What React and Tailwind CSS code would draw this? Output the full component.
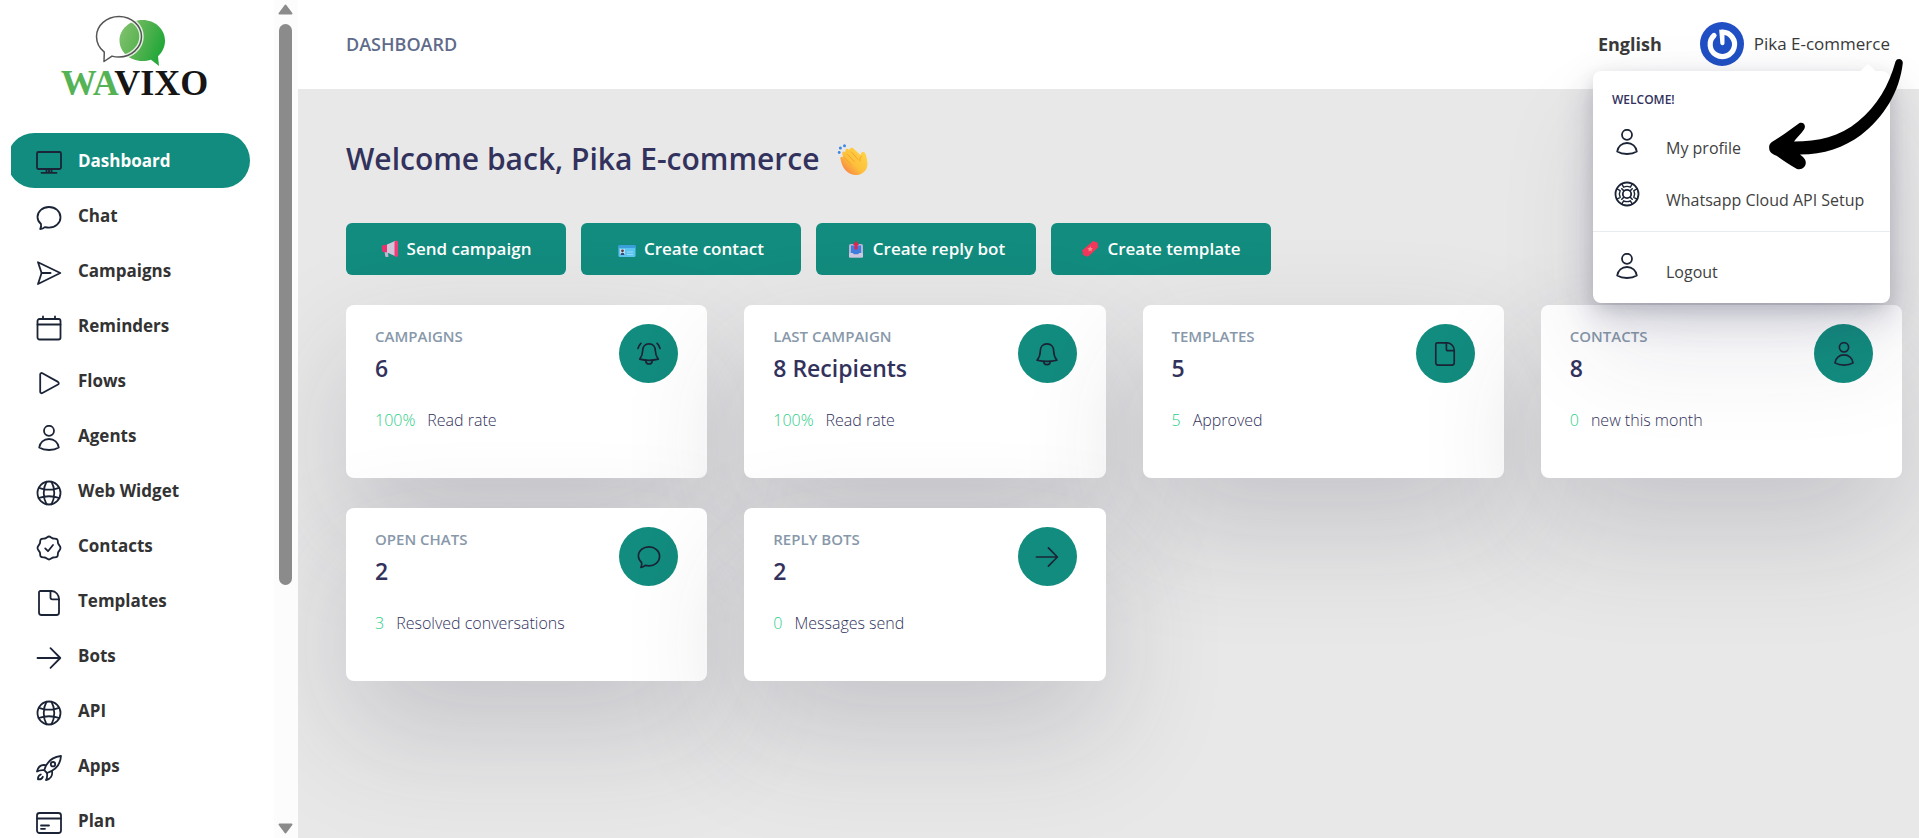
import React from 'react';

const Icon = ({ children, className = 'h-[26px] w-[26px]' }) => (
    <svg viewBox="0 0 26 26" fill="none" stroke="#1b2436" strokeWidth="1.8" strokeLinecap="round" strokeLinejoin="round" className={`shrink-0 ${className}`} aria-hidden="true">
        {children}
    </svg>
);

const shapes = {
    monitor: (
        <>
            <rect x="1" y="2" width="24" height="17" rx="1.5" />
            <path d="M5.500 22.800h15M10.500 19.500v3M15.500 19.500v3M13 19.500v3" />
        </>
    ),
    chat: <path d="M4.200 24.200c.9-1.800 1.200-3.400.8-5.200C2.900 17.200 1.500 14.800 1.500 12 1.500 6.300 6.700 2 13 2s11.500 4.300 11.500 10.200S19.300 22.600 13 22.600c-1.600 0-2.800-.2-4.200-.5-1.200 1.200-2.700 1.900-4.600 2.100z" />,
    send: (
        <>
            <path d="M2 2.200 24.300 13 2 24l3.600-11z" />
            <path d="M5.600 13h9" />
        </>
    ),
    calendar: (
        <>
            <rect x="1.500" y="4" width="23" height="20.500" rx="2" />
            <path d="M1.500 9.500h23M7 1.500V4M19 1.500V4" />
        </>
    ),
    play: <path d="M4.200 4.500v17.200c0 1.200 1.200 1.900 2.200 1.300l15.600-8.500c1-.6 1-2 0-2.600L6.400 3.200c-1-.5-2.200.2-2.200 1.300z" />,
    user: (
        <>
            <circle cx="13" cy="5.800" r="5" />
            <path d="M3.200 22.600C3.800 17.500 7.800 14 13 14s9.200 3.500 9.800 8.600C20 24.300 16.500 25 13 25s-7-.7-9.800-2.400z" />
        </>
    ),
    globe: (
        <>
            <circle cx="13" cy="13" r="11.500" />
            <path d="M10.500 1.800C6.800 8.500 6.800 17.500 10.500 24.200M15.500 1.800c3.700 6.700 3.700 15.700 0 22.400M3 7.800c6 2.300 14 2.300 20 0M2.600 18c6-2 14.800-2 20.800 0" />
        </>
    ),
    verified: (
        <>
            <path d="M13 1.500c1.500 0 2.500 1.700 4.100 2 1.500.3 3.100-.3 4.100.8s.4 2.700.9 4.100c.5 1.500 2.400 2.700 2.400 4.600s-1.900 3.100-2.400 4.600c-.5 1.400.1 3-.9 4.100s-2.600.5-4.100.8c-1.600.3-2.600 2-4.100 2s-2.500-1.700-4.100-2c-1.500-.3-3.100.3-4.100-.8s-.4-2.700-.9-4.100C3.400 16.100 1.500 14.900 1.500 13s1.900-3.100 2.400-4.600c.5-1.400-.1-3 .9-4.100s2.600-.5 4.100-.8c1.600-.3 2.600-2 4.100-2z" />
            <path d="m9.200 13.400 2.800 2.800 5-6.200" />
        </>
    ),
    file: (
        <>
            <path d="M4.500 1h11.200c4 0 7.300 4 7.300 8v13.500c0 1.300-.9 2.500-2.500 2.500h-15C3.900 25 3 23.800 3 22.500v-20C3 1.600 3.600 1 4.500 1z" />
            <path d="M14.500 1v6.500c0 1.200.8 1.900 1.900 1.900H23" />
        </>
    ),
    arrow: <path d="M1.500 13H24M14.500 3.200 24.300 13l-9.800 9.800" />,
    rocket: (
        <>
            <path d="M8.200 15.200C10.500 7.500 16.500 1.800 25 1c-.6 8.600-6.300 14.500-14 17z" />
            <circle cx="17" cy="9.200" r="2.200" />
            <path d="M9.800 10.200c-4-.8-7.600 1.200-8.800 6.300 2.200-1.200 4.800-1.600 7.200-1.300M16 16.300c.8 4-1.200 7.600-6 8.700 1.200-2.200 1.400-4.600 1-7M4.800 19.500c-2 .8-3 2.600-2.800 4.900 2.200.2 4-.7 4.800-2.600" />
        </>
    ),
    card: (
        <>
            <rect x="1" y="3" width="24" height="20" rx="2.500" />
            <path d="M5 15.500h8M5 18.800h4" />
            <path d="M1.500 8.500h23" strokeWidth="2.200" />
        </>
    ),
    bell: (
        <>
            <path d="M13 2C8.200 2 5.800 5.600 5.800 9.500c0 4-.8 6.800-3.600 10.300 6.800 1.600 14.800 1.600 21.600 0-2.800-3.500-3.600-6.300-3.600-10.300C20.200 5.600 17.800 2 13 2z" />
            <path d="M9.500 21.200c0 4.400 7 4.400 7 0" />
        </>
    ),
    bellRing: (
        <>
            <path d="M13 2C8.600 2 6.200 5.400 6.200 9c0 4-.8 6.300-3.300 9.600 6.300 1.600 13.900 1.600 20.200 0-2.500-3.300-3.300-5.600-3.300-9.600C19.800 5.400 17.400 2 13 2z" />
            <path d="M9.500 20.200c0 4.800 7 4.800 7 0M4.200 1.500C2.700 3 1.700 4.800 1 7M21.800 1.500C23.300 3 24.300 4.800 25 7" />
        </>
    ),
    support: (
        <>
            <circle cx="13" cy="13" r="11.500" />
            <circle cx="13" cy="13" r="4.200" />
            <path d="M7.800 2.900 9.600 6.200c2-1 4.800-1 6.800 0l1.800-3.300M7.800 23.100l1.800-3.300c2 1 4.800 1 6.800 0l1.800 3.300M2.900 7.800l3.300 1.800c-1 2-1 4.800 0 6.800l-3.300 1.800M23.100 7.800l-3.300 1.800c1 2 1 4.800 0 6.800l3.300 1.800" strokeWidth="1.400" />
            <path d="m9.800 9.800-2-2M16.200 9.800l2-2M9.800 16.200l-2 2M16.200 16.200l2 2" strokeWidth="1.600" />
        </>
    ),
};

const navItems = [
    { label: 'Dashboard', icon: 'monitor', active: true },
    { label: 'Chat', icon: 'chat' },
    { label: 'Campaigns', icon: 'send' },
    { label: 'Reminders', icon: 'calendar' },
    { label: 'Flows', icon: 'play' },
    { label: 'Agents', icon: 'user' },
    { label: 'Web Widget', icon: 'globe' },
    { label: 'Contacts', icon: 'verified' },
    { label: 'Templates', icon: 'file' },
    { label: 'Bots', icon: 'arrow' },
    { label: 'API', icon: 'globe' },
    { label: 'Apps', icon: 'rocket' },
    { label: 'Plan', icon: 'card' },
];

const MegaphoneEmoji = () => (
    <svg viewBox="0 0 18 18" className="h-[18px] w-[18px]" aria-hidden="true">
        <path d="M3.500 11h3l1 5.500c0 .6-3 .6-3.200 0z" fill="#c3b7cf" />
        <path d="M1 5.500 6 4.500v8L1 11.500z" fill="#e8336d" />
        <path d="M6 4.500 14 1v15l-8-3.500z" fill="#cfc6da" />
        <rect x="13.500" y=".5" width="3.500" height="16.500" rx="1.700" fill="#ef3e78" />
    </svg>
);

const CardEmoji = () => (
    <svg viewBox="0 0 18 18" className="h-[18px] w-[18px]" aria-hidden="true">
        <rect x=".5" y="5" width="17" height="12" rx="1.500" fill="#5cc5f2" />
        <rect x=".5" y="5" width="17" height="3" rx="1" fill="#3a9fdb" />
        <rect x="2" y="9" width="5" height="6" fill="#b9dcf0" />
        <circle cx="4.500" cy="10.800" r="1.400" fill="#5b3b3b" />
        <path d="M2.500 15c0-3 4-3 4 0z" fill="#2f4b7c" />
        <path d="M9 12h6M9 14.500h6" stroke="#93dafa" strokeWidth="1" />
    </svg>
);

const OutboxEmoji = () => (
    <svg viewBox="0 0 18 18" className="h-[18px] w-[18px]" aria-hidden="true">
        <rect x="2" y="4" width="14" height="13.500" rx="1.500" fill="#b9b3d6" />
        <path d="M4 5.500h10V14H4z" fill="#3f7fe0" />
        <path d="M2 13h4l1 2h4l1-2h4v3.500c0 .6-.4 1-1 1H3c-.6 0-1-.4-1-1z" fill="#cfc9e4" />
        <path d="M9 .8 12 5h-1.500v4.500h-3V5H6z" fill="#e5234f" />
    </svg>
);

const TicketEmoji = () => (
    <svg viewBox="0 0 18 18" className="h-[18px] w-[18px]" aria-hidden="true">
        <path d="M12.500.8 14 2l1.600-.2L17.200 4l-.6 1.600.9 1.500L6.800 17l-1.400-1.200-1.700.3L1.500 14l.5-1.700-1.200-1.500z" fill="#f0385d" />
        <path d="m9.200 6.300.8 1.700 1.900.3-1.400 1.300.3 1.900-1.600-.9-1.700.9.3-1.900-1.400-1.300 2-.3z" fill="#ff8a80" />
    </svg>
);

const ClapEmoji = () => (
    <svg viewBox="0 0 31 31" className="h-[31px] w-[31px]" aria-hidden="true">
        <defs>
            <linearGradient id="hand" x1="1" y1="0" x2="0" y2="1">
                <stop offset="0" stopColor="#ffd84a" />
                <stop offset=".55" stopColor="#fdc03a" />
                <stop offset="1" stopColor="#f4694a" />
            </linearGradient>
        </defs>
        <path d="M3.500 15c-.8-2 1.300-3 2.500-1.800L5.300 9.500c-.3-2 1.700-2.600 2.800-1.200l.4-2c.3-1.900 2.300-1.900 3.300-.5l1.700-1.500c1.200-1 2.700-.3 3.400.8l6.600 5.900.6-1.800c.6-1.700 3.300-1.600 4.200.2 1.500 3.500 2.700 9.500 1.900 13-1.400 5.700-6.500 8.800-12.200 8.500C10.500 30.500 5 24 3.500 15z" fill="url(#hand)" />
        <path d="m8 14 6 6.500M10.500 10.500l7 7M14.500 8l6.500 7.500M24.500 12c-1.500 1.500-2 3-1.600 5" stroke="#f3a02c" strokeWidth=".9" strokeLinecap="round" fill="none" />
        <g fill="#3b86e8">
            <circle cx="2.200" cy="8.500" r="1.400" />
            <circle cx="3.400" cy="4" r="1.500" />
            <circle cx="7.500" cy="1.800" r="1.500" />
        </g>
    </svg>
);

const actions = [
    { label: 'Send campaign', emoji: <MegaphoneEmoji /> },
    { label: 'Create contact', emoji: <CardEmoji /> },
    { label: 'Create reply bot', emoji: <OutboxEmoji /> },
    { label: 'Create template', emoji: <TicketEmoji /> },
];

const stats = [
    { title: 'CAMPAIGNS', value: '6', count: '100%', note: 'Read rate', icon: 'bellRing' },
    { title: 'LAST CAMPAIGN', value: '8 Recipients', count: '100%', note: 'Read rate', icon: 'bell' },
    { title: 'TEMPLATES', value: '5', count: '5', note: 'Approved', icon: 'file' },
    { title: 'CONTACTS', value: '8', count: '0', note: 'new this month', icon: 'user' },
    { title: 'OPEN CHATS', value: '2', count: '3', note: 'Resolved conversations', icon: 'chat' },
    { title: 'REPLY BOTS', value: '2', count: '0', note: 'Messages send', icon: 'arrow' },
];

const Logo = () => (
    <a href="#home" className="flex h-[133px] flex-col items-center pt-[15px] pr-4">
        <svg viewBox="0 0 72 52" className="mr-2 h-[52px] w-[72px]" aria-hidden="true">
            <defs>
                <linearGradient id="leaf" x1="0" y1="0" x2="1" y2=".4">
                    <stop offset="0" stopColor="#84c473" />
                    <stop offset=".45" stopColor="#62b657" />
                    <stop offset="1" stopColor="#25a83a" />
                </linearGradient>
            </defs>
            <path d="M47.500 5C60 5 70 14 70 25.500c0 7-3 12-7 15.800L64 51l-8-6.200c-2.700.9-5.500 1.200-8.500 1.200-13 0-23-9.500-23-20.500S34.500 5 47.500 5z" fill="url(#leaf)" />
            <path d="M24 1.500c12.500 0 22.500 9 22.500 20S36.500 42 24 42c-2.600 0-5-.3-7-.9L9 46.500l.3-9.300C4.800 33.500 1.500 28 1.500 21.500c0-11 10-20 22.500-20z" fill="none" stroke="#fff" strokeWidth="4.500" strokeLinejoin="round" opacity=".8" />
            <path d="M24 1.500c12.500 0 22.500 9 22.500 20S36.500 42 24 42c-2.600 0-5-.3-7-.9L9 46.500l.3-9.300C4.800 33.500 1.500 28 1.500 21.500c0-11 10-20 22.500-20z" fill="none" stroke="#555" strokeWidth="1.500" strokeLinejoin="round" />
        </svg>
        <span className="font-['Liberation_Serif',serif] text-[36px] leading-8 font-bold text-[#151515]">
            <span className="text-[#55b356]">WA</span>VIXO
        </span>
    </a>
);

const Sidebar = () => (
    <aside className="sticky top-0 flex h-screen w-[298px] shrink-0 bg-white">
        <div className="ml-[11px] flex-1 overflow-hidden">
            <Logo />
            <nav>
                <ul>
                    {navItems.map((item) => (
                        <li key={item.label}>
                            <a
                                href="#nav"
                                className={`-ml-1 mr-6 flex h-[55px] items-center gap-4 rounded-full pl-[29px] text-[17px] font-bold ${item.active ? 'bg-[#128c7e] text-white' : 'text-[#333]'}`}
                            >
                                <Icon className="mt-1 h-[26px] w-[26px]">{shapes[item.icon]}</Icon>
                                {item.label}
                            </a>
                        </li>
                    ))}
                </ul>
            </nav>
        </div>

        {/* Scroll track */}
        <div className="flex w-6 flex-col items-center gap-[9px] bg-[#fcfcfc] py-1 pr-px">
            <svg viewBox="0 0 15 11" className="h-[11px] w-[15px] shrink-0" aria-hidden="true">
                <path d="M7.500 1.500 13.500 9.500h-12z" fill="#8b8b8b" stroke="#8b8b8b" strokeWidth="2" strokeLinejoin="round" />
            </svg>
            <div className="w-[13px] flex-1">
                <div className="h-[71%] rounded-full bg-[#8b8b8b]" />
            </div>
            <svg viewBox="0 0 15 11" className="h-[11px] w-[15px] shrink-0" aria-hidden="true">
                <path d="M7.500 9.500 1.500 1.500h12z" fill="#8b8b8b" stroke="#8b8b8b" strokeWidth="2" strokeLinejoin="round" />
            </svg>
        </div>
    </aside>
);

const MenuItem = ({ icon, label }) => (
    <a href="#menu" className="flex h-[52px] items-center gap-6 px-[19px] text-base text-[#414141]">
        <Icon className="mb-3 h-[26px] w-[30px]">{shapes[icon]}</Icon>
        <span className="whitespace-nowrap">{label}</span>
    </a>
);

const UserMenu = () => (
    <div className="absolute top-full right-0 mt-[5px] w-[297px] rounded-lg bg-white pt-5 shadow-[0_50px_100px_rgba(50,50,93,0.1),0_15px_35px_rgba(50,50,93,0.22),0_5px_15px_rgba(0,0,0,0.1)]">
        {/* Caret */}
        <div className="absolute -top-[5px] right-4 h-3 w-3 rotate-45 rounded-xs bg-white" />
        <h6 className="px-[19px] text-xs leading-[18px] font-semibold text-[#32325d]">WELCOME!</h6>
        <div className="pt-[13px]">
            <MenuItem icon="user" label="My profile" />
            <MenuItem icon="support" label="Whatsapp Cloud API Setup" />
        </div>
        <hr className="mt-[5px] border-[#e9ecef]" />
        <div className="pt-[14px] pb-[5px]">
            <MenuItem icon="user" label="Logout" />
        </div>

        {/* Hand-drawn pointer */}
        <svg viewBox="0 0 136 114" className="pointer-events-none absolute -top-[14px] -right-[14px] h-[114px] w-[136px]" aria-hidden="true">
            <path d="M127.500 4.500c1.500-4 7.500-3 7.300 1.500C131.500 35 116 60 93 78c-17 12.500-37 19.500-61 19.500l3 2.500c6 5.500 1.500 14-6 12C21 108 15 103 8 98.500c-4-1-7-4-6.800-7.500C.5 86 5 84.500 11 80.500c8-5 14-10 20.500-14.500 4-1.500 7 2.500 4.500 6.500-3.500 5-7.500 8.500-10 12 24 0 46-5 64-20 19-15.500 31-36 37.500-60z" fill="#000" />
        </svg>
    </div>
);

const Header = () => (
    <header className="relative z-10 flex h-[89px] items-center justify-between bg-white pr-[29px] pb-[2px] pl-12">
        <h1 className="text-lg font-semibold text-[#5f6b8a]">DASHBOARD</h1>
        <div className="relative flex items-center gap-[38px]">
            <button type="button" className="text-lg font-bold text-[#3a3a3a]">English</button>
            <button type="button" className="flex items-center gap-[10px] text-[17px] font-medium text-[#3a3a3a]">
                <svg viewBox="0 0 44 44" className="h-[44px] w-[44px]" aria-hidden="true">
                    <circle cx="22" cy="22" r="22" fill="#2150c4" />
                    <path d="M14 13.500a12.200 12.200 0 1 0 8.500-3.300" fill="none" stroke="#fff" strokeWidth="5.200" strokeLinecap="round" />
                    <path d="M19.200 7.800h3.300l2 4v9.500c0 2.600-4 2.600-4.200 0z" fill="#fff" />
                </svg>
                Pika E-commerce
            </button>
            <UserMenu />
        </div>
    </header>
);

const StatCard = ({ stat }) => (
    <div className="flex min-h-[173px] items-start justify-between rounded-lg bg-white px-[29px] py-[19px] shadow-[0_50px_120px_rgba(50,50,75,0.19)]">
        <div>
            <h5 className="text-[15px] leading-6 font-semibold text-[#8898aa]">{stat.title}</h5>
            <p className="mt-1 text-[23px] leading-8 font-semibold text-[#32325d]">{stat.value}</p>
            <p className="mt-6 flex gap-3 text-base leading-6 font-light text-[#32325d]">
                <span className="text-[#2dce89]">{stat.count}</span>
                <span>{stat.note}</span>
            </p>
        </div>
        <div className="flex h-[59px] w-[59px] items-center justify-center rounded-full bg-[#128c7e]">
            <Icon className="h-6 w-6">{shapes[stat.icon]}</Icon>
        </div>
    </div>
);

export default function App() {
    return (
        <div className="flex min-h-screen bg-[#e8e8e8] font-['Open_Sans','Noto_Sans',sans-serif]">
            <Sidebar />

            <div className="min-w-0 flex-1">
                <Header />

                <main className="pt-[46px] pr-[17px] pb-10 pl-12">
                    <h2 className="flex items-center gap-[18px] text-[30px] leading-[48px] font-semibold text-[#32325d]">
                        Welcome back, Pika E-commerce
                        <ClapEmoji />
                    </h2>

                    <div className="mt-10 flex flex-wrap gap-[15px]">
                        {actions.map((action) => (
                            <button
                                key={action.label}
                                type="button"
                                className="flex h-[52px] w-[220px] items-center justify-center gap-2 rounded-md bg-[#128c7e] text-[17px] font-semibold text-white"
                            >
                                {action.emoji}
                                {action.label}
                            </button>
                        ))}
                    </div>

                    <div className="mt-[30px] grid grid-cols-4 gap-x-[37px] gap-y-[30px]">
                        {stats.map((stat) => (
                            <StatCard key={stat.title} stat={stat} />
                        ))}
                    </div>
                </main>
            </div>
        </div>
    );
}
